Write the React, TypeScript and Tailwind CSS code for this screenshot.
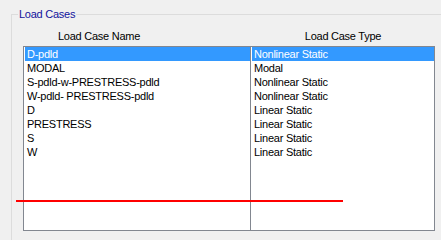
const loadCases = [
  { name: "D-pdld", type: "Nonlinear Static" },
  { name: "MODAL", type: "Modal" },
  { name: "S-pdld-w-PRESTRESS-pdld", type: "Nonlinear Static" },
  { name: "W-pdld- PRESTRESS-pdld", type: "Nonlinear Static" },
  { name: "D", type: "Linear Static" },
  { name: "PRESTRESS", type: "Linear Static" },
  { name: "S", type: "Linear Static" },
  { name: "W", type: "Linear Static" },
];

const selected = 0;

function ListColumn({ items, className }: { items: string[]; className: string }) {
  return (
    <div className={`h-[185px] border-[#828790] bg-white pl-px ${className}`}>
      {items.map((item, i) => (
        <div
          key={i}
          className={`h-[14px] whitespace-nowrap pl-[2px] leading-[14px] ${
            i === selected ? "bg-[#3399ff] text-white" : "text-black"
          }`}
        >
          {item}
        </div>
      ))}
    </div>
  );
}

export default function App() {
  return (
    <div
      className="relative h-[240px] w-[441px] overflow-hidden bg-[#f0f0f0] text-[11px] tracking-[-0.25px] text-black"
      style={{ fontFamily: '"Liberation Sans", Arial, sans-serif' }}
    >
      <div className="relative ml-[11px] mt-[14px] h-[300px] w-[500px] border-l border-t border-[#dcdcdc]">
        <span className="absolute left-[6px] top-[-8px] bg-[#f0f0f0] px-px leading-[14px] text-[#12129c]">
          Load Cases
        </span>

        <div className="flex pl-[11px] pt-[14px] leading-[14px]">
          <div className="w-[228px] pl-[35px]">Load Case Name</div>
          <div className="w-[184px] text-center">Load Case Type</div>
        </div>

        <div className="mt-[3px] flex pl-[11px]">
          <ListColumn items={loadCases.map((c) => c.name)} className="w-[228px] border" />
          <ListColumn items={loadCases.map((c) => c.type)} className="w-[184px] border border-l-0" />
        </div>
      </div>

      {/* red marker drawn over the list */}
      <div className="absolute left-[16px] top-[200px] h-[2px] w-[327px] bg-[#ff0000]" />
    </div>
  );
}
